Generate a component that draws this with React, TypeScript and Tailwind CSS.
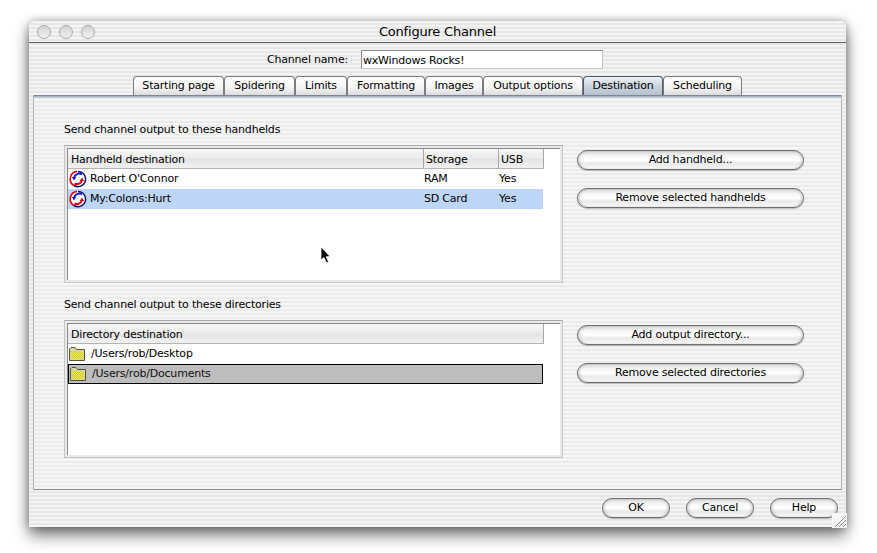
import React from 'react';

const stripes =
  'bg-[repeating-linear-gradient(180deg,#f4f4f4_0px,#f4f4f4_2px,#e7e7e7_2px,#e7e7e7_4px)]';
const panelStripes =
  'bg-[repeating-linear-gradient(180deg,#f6f6f6_0px,#f6f6f6_2px,#ebebeb_2px,#ebebeb_4px)]';
const font = "font-['DejaVu_Sans',sans-serif] tracking-[-0.2px]";

const tabs = [
  { label: 'Starting page', width: 'w-[91px]' },
  { label: 'Spidering', width: 'w-[71px]' },
  { label: 'Limits', width: 'w-[52px]' },
  { label: 'Formatting', width: 'w-[78px]' },
  { label: 'Images', width: 'w-[58px]' },
  { label: 'Output options', width: 'w-[100px]' },
  { label: 'Destination', width: 'w-[80px]', active: true },
  { label: 'Scheduling', width: 'w-[79px]' }
];

// Handheld sync icon: ring with a red and a blue arrow
const SyncIcon = () => (
  <svg width="18" height="18" viewBox="0 0 18 18" className="shrink-0">
    <circle cx="9" cy="9" r="7.8" fill="#fff" />
    <path d="M8 1.4 A7.6 7.6 0 0 0 5 15.5" fill="none" stroke="#e8000c" strokeWidth="1.6" />
    <path d="M5 15.5 A7.6 7.6 0 0 0 16.5 8" fill="none" stroke="#0c0c70" strokeWidth="1.5" />
    <path d="M9 1.4 A7.6 7.6 0 0 1 16.5 8" fill="none" stroke="#0c0c70" strokeWidth="1.5" />
    <path d="M13 4.5 A5.2 5.2 0 0 0 5 8" fill="none" stroke="#1020e8" strokeWidth="2" />
    <path d="M2.8 7 L7.4 7 L5 10.4 Z" fill="#1020e8" />
    <path d="M5.5 13.5 A5.2 5.2 0 0 0 13 10" fill="none" stroke="#e8000c" strokeWidth="2" />
    <path d="M15.2 11 L10.6 11 L13 7.6 Z" fill="#e8000c" />
  </svg>
);

// Folder with the dithered yellow fill of the old system icon
const FolderIcon = ({ id }: { id: string }) => (
  <svg width="16" height="14" viewBox="0 0 16 14" className="shrink-0">
    <defs>
      <pattern id={id} width="2" height="2" patternUnits="userSpaceOnUse">
        <rect width="2" height="2" fill="#f6f03a" />
        <rect width="1" height="1" fill="#c9c64a" />
        <rect x="1" y="1" width="1" height="1" fill="#c9c64a" />
      </pattern>
    </defs>
    <path d="M0.5 13.5 L0.5 2 L2 0.5 L6 0.5 L7.5 2.5 L15.5 2.5 L15.5 13.5 Z" fill="#d8d6a8" stroke="#55553a" strokeWidth="1" />
    <rect x="2" y="4" width="12" height="8" fill={`url(#${id})`} />
  </svg>
);

const Pill = ({ label, className }: { label: string; className: string }) => (
  <button
    className={`${className} h-[20px] rounded-full border border-[#6f6f6f] bg-[linear-gradient(180deg,#d6d6d6_0%,#f4f4f4_25%,#ffffff_50%,#e9e9e9_70%,#fbfbfb_100%)] shadow-[0_1px_1px_rgba(0,0,0,0.25),inset_2px_0_2px_rgba(0,0,0,0.12),inset_-2px_0_2px_rgba(0,0,0,0.12)] text-[11px] leading-[18px] text-black text-center`}
  >
    {label}
  </button>
);

const Well = ({ children }: { children: React.ReactNode }) => (
  <div className="w-[499px] h-[138px] p-[2px] border border-[#c6c6c6] border-t-[#a9a9a9] bg-[#e9e9e9]">
    <div className="h-full bg-white border-l border-t border-[#8a8a8a] pr-[16px]">{children}</div>
  </div>
);

const HeaderCell = ({ label, className }: { label: string; className: string }) => (
  <div className={`${className} h-[19px] leading-[21px] text-[11px] text-black border-r border-[#a8a8a8]`}>
    {label}
  </div>
);

const HeaderRow = ({ children }: { children: React.ReactNode }) => (
  <div className="flex h-[20px] border-b border-[#b4b4b4] bg-[linear-gradient(180deg,#f7f7f7_0%,#ececec_45%,#e4e4e4_55%,#f1f1f1_100%)]">
    {children}
  </div>
);

const handhelds = [
  { name: "Robert O'Connor", storage: 'RAM', usb: 'Yes', selected: false },
  { name: 'My:Colons:Hurt', storage: 'SD Card', usb: 'Yes', selected: true }
];

const directories = [
  { path: '/Users/rob/Desktop', selected: false },
  { path: '/Users/rob/Documents', selected: true }
];

export default function App() {
  return (
    <div className={`${font} relative w-[877px] h-[553px] bg-white pt-[21px] pl-[29px] overflow-hidden`}>
      {/* Window */}
      <div className={`${stripes} w-[817px] h-[506px] rounded-t-[6px] shadow-[0_8px_16px_rgba(0,0,0,0.55),0_0_8px_rgba(0,0,0,0.3)] flex flex-col`}>
        {/* Title bar */}
        <div className="flex items-center h-[22px] shrink-0 border-b border-[#5e5e5e] px-[8px]">
          <div className="flex gap-[8px] w-[60px]">
            {[0, 1, 2].map((i) => (
              <div
                key={i}
                className="w-[14px] h-[14px] rounded-full border border-[#a9a9a9] bg-[linear-gradient(180deg,#d2d2d2_0%,#f2f2f2_100%)]"
              />
            ))}
          </div>
          <div className="flex-1 text-center text-[13px] text-black leading-[20px]">Configure Channel</div>
          <div className="w-[60px]" />
        </div>

        {/* Channel name */}
        <div className="flex items-center h-[19px] mt-[7px] pl-[238px] shrink-0">
          <span className="w-[94px] text-[11px] leading-[21px] text-black">Channel name:</span>
          <input
            readOnly
            value="wxWindows Rocks!"
            className="w-[242px] h-[19px] bg-white border border-[#8f8f8f] border-b-[#c4c4c4] border-r-[#c4c4c4] px-[1px] pt-[2px] text-[11px] text-black outline-none"
          />
        </div>

        {/* Tabs */}
        <div className="flex h-[19px] mt-[7px] pl-[104px] shrink-0">
          {tabs.map((tab) => (
            <div
              key={tab.label}
              className={`${tab.width} h-[19px] rounded-t-[4px] border border-b-0 text-center text-[11px] leading-[18px] text-black ${
                tab.active
                  ? 'border-[#4e5a68] bg-[linear-gradient(180deg,#eef1f5_0%,#c9d2dc_55%,#b6c2cf_100%)]'
                  : 'border-[#7c7c7c] bg-[linear-gradient(180deg,#ffffff_0%,#f6f6f6_55%,#dcdcdc_100%)]'
              }`}
            >
              {tab.label}
            </div>
          ))}
        </div>

        {/* Tab panel */}
        <div className={`${panelStripes} w-[809px] h-[395px] ml-[4px] shrink-0 border border-[#b4b4b4] border-b-[#8c8c8c] border-t-0`}>
          <div className="h-[3px] bg-[linear-gradient(180deg,#66707c_0%,#aab4c0_50%,#d5dae0_100%)]" />
          <div className="pl-[30px] pt-[25px]">
            {/* Handhelds */}
            <div className="text-[11px] leading-[13px] text-black h-[13px]">Send channel output to these handhelds</div>
            <div className="flex mt-[9px]">
              <Well>
                <HeaderRow>
                  <HeaderCell label="Handheld destination" className="w-[356px] pl-[3px]" />
                  <HeaderCell label="Storage" className="w-[75px] pl-[2px]" />
                  <HeaderCell label="USB" className="w-[45px] pl-[2px]" />
                </HeaderRow>
                {handhelds.map((row) => (
                  <div
                    key={row.name}
                    className={`flex items-center w-[475px] h-[20px] text-[11px] text-black ${row.selected ? 'bg-[#bdd5f6]' : 'bg-white'}`}
                  >
                    <div className="w-[356px] flex items-center gap-[3px] pl-[1px]">
                      <SyncIcon />
                      {row.name}
                    </div>
                    <div className="w-[75px]">{row.storage}</div>
                    <div>{row.usb}</div>
                  </div>
                ))}
              </Well>
              <div className="flex flex-col gap-[18px] ml-[14px] pt-[5px]">
                <Pill label="Add handheld..." className="w-[227px]" />
                <Pill label="Remove selected handhelds" className="w-[227px]" />
              </div>
            </div>

            {/* Directories */}
            <div className="text-[11px] leading-[13px] text-black h-[13px] mt-[15px]">Send channel output to these directories</div>
            <div className="flex mt-[9px]">
              <Well>
                <HeaderRow>
                  <HeaderCell label="Directory destination" className="w-[476px] pl-[3px]" />
                </HeaderRow>
                {directories.map((row) => (
                  <div
                    key={row.path}
                    className={`flex items-center gap-[6px] w-[475px] h-[20px] pl-[1px] text-[11px] ${
                      row.selected ? 'bg-[#bdbdbd] border border-black text-[#111] pl-0' : 'bg-white text-black'
                    }`}
                  >
                    <FolderIcon id={row.selected ? 'dither-selected' : 'dither-plain'} />
                    {row.path}
                  </div>
                ))}
              </Well>
              <div className="flex flex-col gap-[18px] ml-[14px] pt-[5px]">
                <Pill label="Add output directory..." className="w-[227px]" />
                <Pill label="Remove selected directories" className="w-[227px]" />
              </div>
            </div>
          </div>
        </div>

        {/* Dialog buttons */}
        <div className="flex justify-end gap-[16px] mt-[8px] pr-[8px]">
          <Pill label="OK" className="w-[68px]" />
          <Pill label="Cancel" className="w-[68px]" />
          <Pill label="Help" className="w-[68px]" />
        </div>
      </div>

      {/* Resize grip */}
      <svg width="15" height="15" viewBox="0 0 15 15" className="absolute left-[832px] top-[513px]">
        <rect width="15" height="15" fill="#f7f7f7" />
        <path d="M3 14 L14 3 M7 14 L14 7 M11 14 L14 11" stroke="#8a8a8a" strokeWidth="1" />
      </svg>

      {/* Mouse pointer */}
      <svg width="12" height="19" viewBox="0 0 12 19" className="absolute left-[320px] top-[246px]">
        <path d="M1 1 L1 14 L4 11.5 L6.5 17 L8.5 16 L6.2 10.8 L10 10.5 Z" fill="#000" stroke="#fff" strokeWidth="0.8" />
      </svg>
    </div>
  );
}
